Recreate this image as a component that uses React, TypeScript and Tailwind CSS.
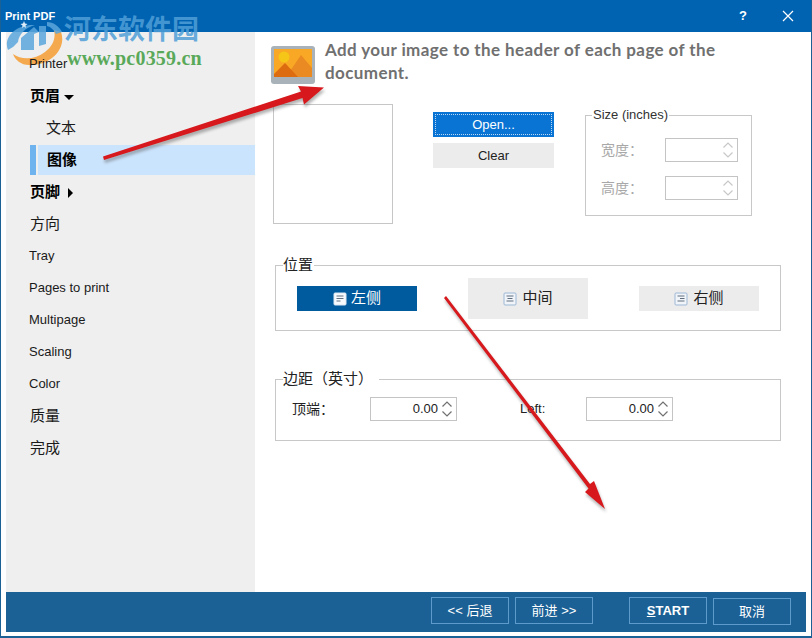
import React from 'react';

const ui = "font-['Liberation_Sans','Noto_Sans_CJK_SC',sans-serif]";

const navRows = [
  { label: '页眉', kind: 'open' },
  { label: '文本', kind: 'sub' },
  { label: '图像', kind: 'active' },
  { label: '页脚', kind: 'closed' },
  { label: '方向', kind: 'cjk' },
  { label: 'Tray', kind: 'plain' },
  { label: 'Pages to print', kind: 'plain' },
  { label: 'Multipage', kind: 'plain' },
  { label: 'Scaling', kind: 'plain' },
  { label: 'Color', kind: 'plain' },
  { label: '质量', kind: 'cjk' },
  { label: '完成', kind: 'cjk' },
];

const Sidebar = () => (
  <aside className="w-[249px] shrink-0 bg-[#efefef] pt-4">
    <div className="relative z-10 flex h-8 items-center pl-[23px] text-[13px] text-[#1a1a1a]">Printer</div>
    {navRows.map((row) => {
      if (row.kind === 'active') {
        return (
          <div key={row.label} className="flex h-8 items-center pl-6">
            <span className="h-[30px] w-[6px] bg-[#6fb3ee]" />
            <span className="ml-[2px] flex h-[30px] flex-1 items-center bg-[#cbe4fd] pl-[9px] text-[15px] font-bold text-black">
              {row.label}
            </span>
          </div>
        );
      }
      if (row.kind === 'sub') {
        return (
          <div key={row.label} className="flex h-8 items-center pl-10 text-[15px] text-[#1a1a1a]">
            {row.label}
          </div>
        );
      }
      if (row.kind === 'open' || row.kind === 'closed') {
        return (
          <div key={row.label} className="flex h-8 items-center pl-6 text-[15px] font-bold text-black">
            {row.label}
            {row.kind === 'open' ? (
              <span className="ml-[4px] mt-[3px] border-x-[5px] border-t-[5px] border-x-transparent border-t-black" />
            ) : (
              <span className="ml-[8px] mt-[1px] border-y-[5px] border-l-[5px] border-y-transparent border-l-black" />
            )}
          </div>
        );
      }
      return (
        <div
          key={row.label}
          className={`flex h-8 items-center text-[#1a1a1a] ${row.kind === 'cjk' ? 'pl-6 text-[15px]' : 'pl-[23px] text-[13px]'}`}
        >
          {row.label}
        </div>
      );
    })}
  </aside>
);

const Spinner = ({ muted = false }: { muted?: boolean }) => (
  <svg width="12" height="18" viewBox="0 0 12 18" fill="none" stroke={muted ? '#c8c8c8' : '#707070'} strokeWidth="1.2">
    <path d="M1.5 6.5 6 2l4.5 4.5" />
    <path d="M1.5 11.5 6 16l4.5-4.5" />
  </svg>
);

const NumberBox = ({ value, muted = false }: { value?: string; muted?: boolean }) => (
  <div
    className={`flex items-center justify-end gap-[3px] border border-[#c4c4c4] pr-[3px] text-[13px] text-[#222] ${
      muted ? 'h-6 w-[73px]' : 'h-6 w-[87px]'
    }`}
  >
    {value}
    <Spinner muted={muted} />
  </div>
);

const DocIcon = ({ lines, light = false }: { lines: string; light?: boolean }) => (
  <svg width="14" height="14" viewBox="0 0 14 14" className="shrink-0">
    <rect x="1" y="1" width="12" height="12" rx="1" fill={light ? '#f1f4f8' : '#f7fafd'} stroke={light ? '#9db8d6' : '#dbe6f1'} />
    <path d={lines} stroke="#5f6f80" strokeWidth="1" fill="none" />
  </svg>
);

const Header = () => (
  <div className="flex h-[72px] items-start pl-4 pt-[14px]">
    <svg width="44" height="38" viewBox="0 0 44 38" className="shrink-0">
      <rect width="44" height="38" rx="3" fill="#a9b2b8" />
      <rect x="3" y="3" width="38" height="28" fill="#f9a825" />
      <circle cx="13" cy="11" r="5.5" fill="#f5c518" />
      <path d="M15 31 30 9l11 13v9Z" fill="#ea8a22" />
      <path d="M3 31v-3l11-11 13 14Z" fill="#dd6b10" />
    </svg>
    <p className="ml-[10px] mt-[-8px] w-[420px] font-['Lato',sans-serif] text-[17px] font-bold leading-[23px] tracking-[0.4px] text-[#707070]">
      Add your image to the header of each page of the document.
    </p>
  </div>
);

const ImageRow = () => (
  <div className="flex h-[120px] items-start pl-[18px]">
    <div className="h-[120px] w-[120px] border border-[#c6c6c6]" />
    <div className="ml-10 mt-2 flex w-[121px] flex-col gap-[6px] text-[13px]">
      <button className="relative flex h-[25px] items-center justify-center bg-[#0a74d4] text-white">
        <span className="absolute inset-[2px] border border-dotted border-[#bcd8f2]" />
        Open...
      </button>
      <button className="flex h-[25px] items-center justify-center bg-[#ececec] text-[#222]">Clear</button>
    </div>
    <fieldset className="ml-[31px] mt-[3px] h-[109px] w-[167px] border border-[#c8c8c8] pl-[15px]">
      <legend className="ml-[-9px] px-[1px] text-[13px] leading-4 text-[#333]">Size (inches)</legend>
      <div className="mt-[15px] flex h-6 items-center justify-between pr-[13px] text-[14px] text-[#a8a8a8]">
        宽度：
        <NumberBox muted />
      </div>
      <div className="mt-[14px] flex h-6 items-center justify-between pr-[13px] text-[14px] text-[#a8a8a8]">
        高度：
        <NumberBox muted />
      </div>
    </fieldset>
  </div>
);

const PositionGroup = () => (
  <fieldset className="ml-5 mt-[31px] h-[76px] w-[506px] border border-[#c8c8c8] pl-[21px]">
    <legend className="ml-[-14px] pr-[1px] text-[15px] leading-5 text-[#222]">位置</legend>
    <div className="mt-[3px] flex h-[41px] items-center">
      <button className="flex h-[25px] w-[120px] items-center justify-center gap-[4px] bg-[#005a9e] text-[15px] text-white">
        <DocIcon lines="M3.5 4h7M3.5 6.5h7M3.5 9h4" />
        左侧
      </button>
      <button className="ml-[51px] flex h-[41px] w-[120px] items-center justify-center gap-[5px] bg-[#ececec] text-[15px] text-[#222]">
        <DocIcon light lines="M3.5 4h7M4.5 6.5h5M3.5 9h7" />
        中间
      </button>
      <button className="ml-[51px] flex h-[25px] w-[120px] items-center justify-center gap-[5px] bg-[#ececec] text-[15px] text-[#222]">
        <DocIcon light lines="M3.5 4h7M6 6.5h4.5M3.5 9h7" />
        右侧
      </button>
    </div>
  </fieldset>
);

const MarginGroup = () => (
  <fieldset className="ml-5 mt-[38px] h-[72px] w-[506px] border border-[#c8c8c8] pl-[16px]">
    <legend className="ml-[-9px] pr-[6px] text-[15px] leading-5 text-[#222]">边距（英寸）</legend>
    <div className="mt-[8px] flex h-6 items-center text-[13px] text-[#222]">
      <span className="w-[78px] text-[14px]">顶端：</span>
      <NumberBox value="0.00" />
      <span className="ml-[63px] w-[66px]">Left:</span>
      <NumberBox value="0.00" />
    </div>
  </fieldset>
);

const FooterButton = ({ children, className = '' }: { children: React.ReactNode; className?: string }) => (
  <button
    className={`flex h-[27px] w-[78px] items-center justify-center border border-[#5c9bcb] text-[13px] text-white ${className}`}
  >
    {children}
  </button>
);

const Footer = () => (
  <div className="mx-[5px] mb-[4px] flex h-10 items-start bg-[#1c6195] pl-[425px] pt-[5px]">
    <FooterButton>&lt;&lt; 后退</FooterButton>
    <FooterButton className="ml-[6px]">前进 &gt;&gt;</FooterButton>
    <FooterButton className="ml-9 font-bold">
      <span>
        <span className="underline">S</span>TART
      </span>
    </FooterButton>
    <FooterButton className="ml-[6px] mt-[1px]">取消</FooterButton>
  </div>
);

const arrowOne = 'M102 156.500 300 91.500l-3-5.500 26 1.500-20 17-1.500-6.500L103 160Z';
const arrowTwo = 'M445 296 589 484l4-3 11 28-20-17 3.500-3.500L443 298Z';

// red annotation arrows + site watermark pasted on top of the screenshot
const Arrows = () => (
  <svg width="812" height="638" className="pointer-events-none absolute left-0 top-0">
    <defs>
      <filter id="soft" x="-10%" y="-10%" width="120%" height="120%">
        <feGaussianBlur stdDeviation="1.5" />
      </filter>
    </defs>
    <g fill="#555" opacity="0.45" filter="url(#soft)" transform="translate(1 3)">
      <path d={arrowOne} />
      <path d={arrowTwo} />
    </g>
    <g fill="#d7181c">
      <path d={arrowOne} />
      <path d={arrowTwo} />
    </g>
  </svg>
);

const Watermark = () => (
  <div className="pointer-events-none absolute left-[5px] top-[12px] flex">
    <svg width="58" height="54" viewBox="5 12 58 54">
      <path d="M60 32C66 48 50 66 28 65 20 65 14 60 12 54 20 60 34 60 44 52 52 46 55 38 53 30Z" fill="#f4a94e" />
      <path d="M7 50C2 38 14 24 34 25 24 28 18 34 17 42L12 47Z" fill="#5ba6dc" fillOpacity="0.85" />
      <path d="M20 50V38L33 27 38 32 33 34V50Z" fill="#5ba6dc" fillOpacity="0.85" />
      <path d="M38 46V26H45V44Z" fill="#5ba6dc" fillOpacity="0.85" />
      <path d="M46 22C52 22 58 26 61 32L55 34C53 30 50 27 46 26Z" fill="#5ba6dc" fillOpacity="0.85" />
      <path d="m23 21 1 2.500 2.500.5-2 1.500.5 2.500-2-1.500-2 1.500.5-2.500-2-1.500 2.500-.5Z" fill="#dcecf8" />
    </svg>
    <div className="ml-0 font-['Liberation_Serif','Noto_Sans_CJK_SC',serif]">
      <div className="text-[27px] font-bold leading-[36px] text-[#4f9fd8]/85">河东软件园</div>
      <div className="ml-[3px] mt-[-1px] text-[20px] font-bold leading-[22px] tracking-[0.2px] text-[#5aa95a]">www.pc0359.cn</div>
    </div>
  </div>
);

export default function App() {
  return (
    <div className={`relative flex h-[638px] w-[812px] flex-col overflow-hidden border-x border-b-2 border-[#1c6195] bg-white ${ui}`}>
      <div className="flex h-8 shrink-0 items-center bg-[#0063b1] pl-1 text-[11px] font-bold text-white">
        Print PDF
        <span className="ml-auto mr-[35px] text-[13px]">?</span>
        <svg width="12" height="12" viewBox="0 0 12 12" className="mr-[17px]" stroke="#fff" strokeWidth="1.2">
          <path d="M1 1l10 10M11 1 1 11" />
        </svg>
      </div>
      <div className="flex min-h-0 flex-1 px-[5px]">
        <Sidebar />
        <main className="flex-1">
          <Header />
          <ImageRow />
          <PositionGroup />
          <MarginGroup />
        </main>
      </div>
      <Footer />
      <Watermark />
      <Arrows />
    </div>
  );
}
